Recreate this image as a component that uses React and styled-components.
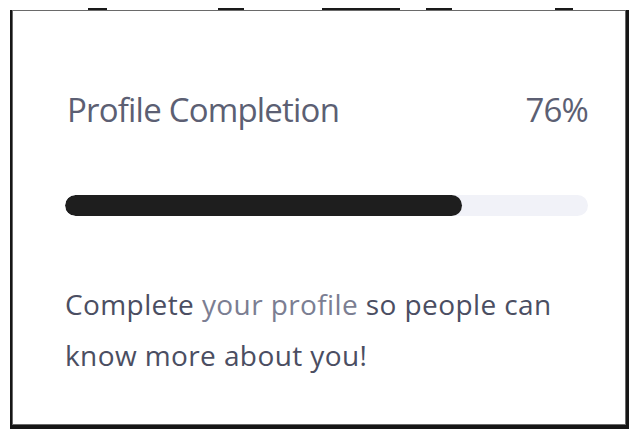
import React from "react";
import styled, { createGlobalStyle } from "styled-components";

const GlobalStyle = createGlobalStyle`
  body {
    margin: 0;
    background: #ffffff;
    font-family: "Open Sans", "Noto Sans", sans-serif;
  }
`;

const Page = styled.div`
  width: 639px;
  height: 439px;
  padding-top: 8px;
  box-sizing: border-box;
  overflow: hidden;
`;

const Ticks = styled.div`
  display: flex;
  height: 2px;
`;

const Tick = styled.div`
  margin-left: ${(p) => p.$gap}px;
  width: ${(p) => p.$width}px;
  height: 2px;
  background: #1a1a1a;
`;

const Card = styled.div`
  margin-left: 12px;
  width: 614px;
  height: 415px;
  box-sizing: border-box;
  border: 1px solid #6a6a6a;
  box-shadow: -2px 0 0 #161616, 3px 0 0 #161616, 0 4px 0 #161616,
    3px 4px 0 #161616, -2px 4px 0 #161616;
  background: #ffffff;
  padding: 76px 37px 0 52px;
  display: flex;
  flex-direction: column;
`;

const Header = styled.div`
  display: flex;
  justify-content: space-between;
  align-items: baseline;
  font-size: 33px;
  line-height: 45px;
  color: #5c5f73;
  letter-spacing: -0.8px;
  padding-left: 2px;
`;

const Track = styled.div`
  margin-top: 63px;
  height: 21px;
  border-radius: 11px;
  background: #f1f2f8;
  overflow: hidden;
`;

const Fill = styled.div`
  height: 100%;
  border-radius: 11px;
  background: #1e1e1e;
`;

const Note = styled.p`
  margin: 63px 0 0;
  font-size: 28px;
  line-height: 51px;
  color: #4b4e62;
  letter-spacing: 0.4px;
`;

const Soft = styled.span`
  color: #7b7e92;
`;

const ticks = [
  { gap: 88, width: 19 },
  { gap: 111, width: 26 },
  { gap: 78, width: 78 },
  { gap: 26, width: 26 },
  { gap: 103, width: 18 },
];

export default function App() {
  const percent = 76;
  return (
    <Page>
      <GlobalStyle />
      <Ticks>
        {ticks.map((t, i) => (
          <Tick key={i} $gap={t.gap} $width={t.width} />
        ))}
      </Ticks>
      <Card>
        <Header>
          <span>Profile Completion</span>
          <span>{percent}%</span>
        </Header>
        <Track>
          <Fill style={{ width: `${percent}%` }} />
        </Track>
        <Note>
          Complete <Soft>your profile</Soft> so people can know more about you!
        </Note>
      </Card>
    </Page>
  );
}
